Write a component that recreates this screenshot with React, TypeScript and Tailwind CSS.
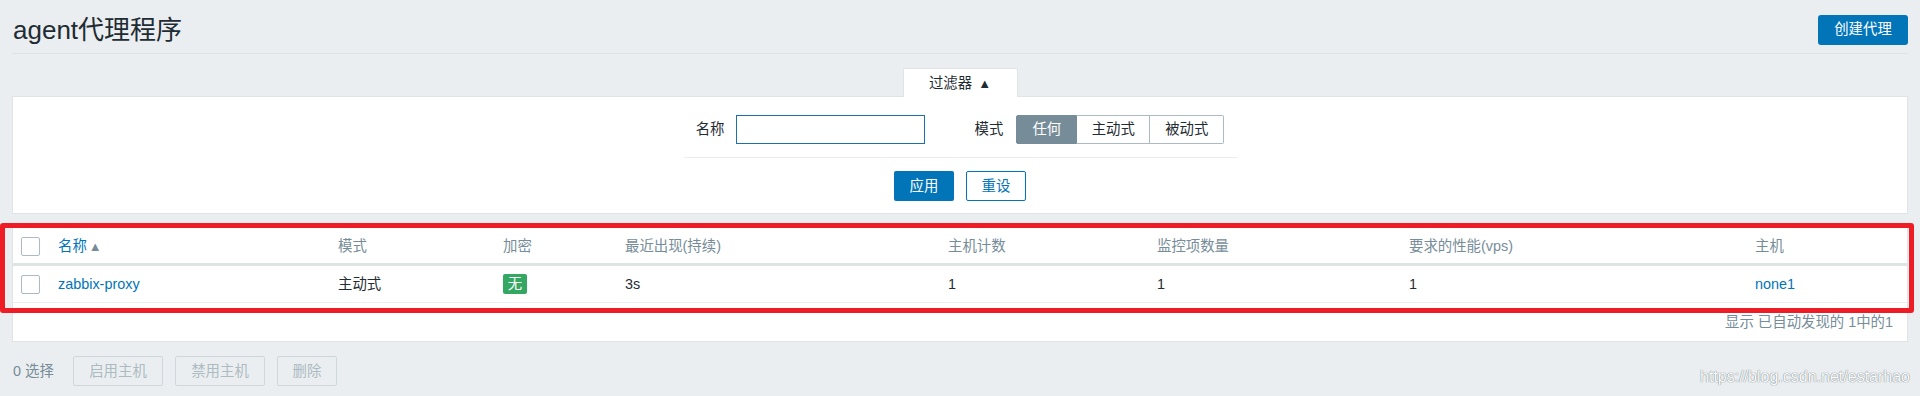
import React from "react";

const cols = "grid grid-cols-[45px_280px_165px_122px_323px_209px_252px_346px_1fr]";

const Checkbox = () => (
  <span className="ml-[8px] block h-[19px] w-[19px] rounded-[2px] border border-[#acbbc2] bg-white" />
);

const App = () => {
  return (
    <div className="relative min-h-[396px] bg-[#ebeef0] text-[14.4px] leading-none text-[#1f2c33] [font-family:'Liberation_Sans','Noto_Sans_CJK_SC',sans-serif]">
      <div className="px-[12px]">
        {/* page title */}
        <div className="flex h-[54px] items-center justify-between border-b border-[#dde2e6] pt-[6px] pl-px">
          <h1 className="text-[26px] leading-none text-[#1f2c33]">agent代理程序</h1>
          <button className="h-[30px] w-[90px] rounded-[3px] bg-[#0275b8] text-white">创建代理</button>
        </div>

        {/* filter */}
        <div className="mt-[14px] flex justify-center">
          <div className="relative z-10 -mb-px flex h-[29px] w-[115px] items-center justify-center rounded-t-[2px] border border-b-0 border-[#dfe4e7] bg-white">
            过滤器 <span className="ml-[6px] text-[13px]">▲</span>
          </div>
        </div>
        <div className="border border-[#dfe4e7] bg-white pt-[18px] pb-[12px]">
          <div className="flex h-[29px] items-center justify-center">
            <span>名称</span>
            <input className="ml-[11px] h-[29px] w-[189px] border border-[#1f6fb0] bg-white outline-none" />
            <span className="ml-[50px]">模式</span>
            <div className="ml-[13px] flex h-[29px]">
              <span className="flex w-[61px] items-center justify-center rounded-l-[2px] border border-[#768d99] bg-[#768d99] text-white">任何</span>
              <span className="flex w-[73px] items-center justify-center border border-l-0 border-[#acbbc2]">主动式</span>
              <span className="flex w-[74px] items-center justify-center rounded-r-[2px] border border-l-0 border-[#acbbc2]">被动式</span>
            </div>
          </div>
          <div className="mx-auto mt-[13px] h-px w-[553px] bg-[#ebeef0]" />
          <div className="mt-[13px] flex justify-center gap-[12px]">
            <button className="h-[30px] w-[60px] rounded-[2px] bg-[#0275b8] text-white">应用</button>
            <button className="h-[30px] w-[60px] rounded-[2px] border border-[#0275b8] bg-white text-[#0275b8]">重设</button>
          </div>
        </div>

        {/* list */}
        <div className="mt-[10px] border border-[#dfe4e7] bg-white">
          <div className={`${cols} h-[41px] items-center border-b-[3px] border-[#dee3e6] pt-[4px] text-[#768d99]`}>
            <Checkbox />
            <span>
              <span className="text-[#0275b8]">名称</span>
              <span className="ml-[2px] text-[13px] text-[#768d99]">▲</span>
            </span>
            <span>模式</span>
            <span>加密</span>
            <span>最近出现(持续)</span>
            <span>主机计数</span>
            <span>监控项数量</span>
            <span>要求的性能(vps)</span>
            <span>主机</span>
          </div>
          <div className={`${cols} h-[37px] items-center border-b border-[#ebeef0]`}>
            <Checkbox />
            <span className="text-[#0275b8]">zabbix-proxy</span>
            <span>主动式</span>
            <span>
              <span className="inline-flex h-[20px] w-[24px] items-center justify-center rounded-[2px] bg-[#34a863] text-white">无</span>
            </span>
            <span>3s</span>
            <span>1</span>
            <span>1</span>
            <span>1</span>
            <span className="text-[#0275b8]">none1</span>
          </div>
          <div className="flex h-[38px] items-center justify-end pr-[14px] text-[#768d99]">显示 已自动发现的 1中的1</div>
        </div>

        {/* actions */}
        <div className="mt-[14px] flex h-[30px] items-center pl-px">
          <span className="w-[60px] text-[#768d99]">0 选择</span>
          <div className="flex gap-[12px]">
            <button className="h-[30px] w-[90px] rounded-[2px] border border-[#d0d7db] bg-[#ebeef0] text-[#acbbc2]">启用主机</button>
            <button className="h-[30px] w-[90px] rounded-[2px] border border-[#d0d7db] bg-[#ebeef0] text-[#acbbc2]">禁用主机</button>
            <button className="h-[30px] w-[60px] rounded-[2px] border border-[#d0d7db] bg-[#ebeef0] text-[#acbbc2]">删除</button>
          </div>
        </div>
      </div>

      {/* screenshot annotation */}
      <div className="pointer-events-none absolute top-[223px] left-0 h-[90px] w-[1914px] rounded-[3px] border-[5px] border-[#ee1c25]" />
      <div className="pointer-events-none absolute top-[369px] right-[10px] text-[16px] leading-none text-[#fafbfb] [text-shadow:0_0_1px_#7d8991,0_0_1px_#7d8991]">
        https://blog.csdn.net/estarhao
      </div>
    </div>
  );
};

export default App;
